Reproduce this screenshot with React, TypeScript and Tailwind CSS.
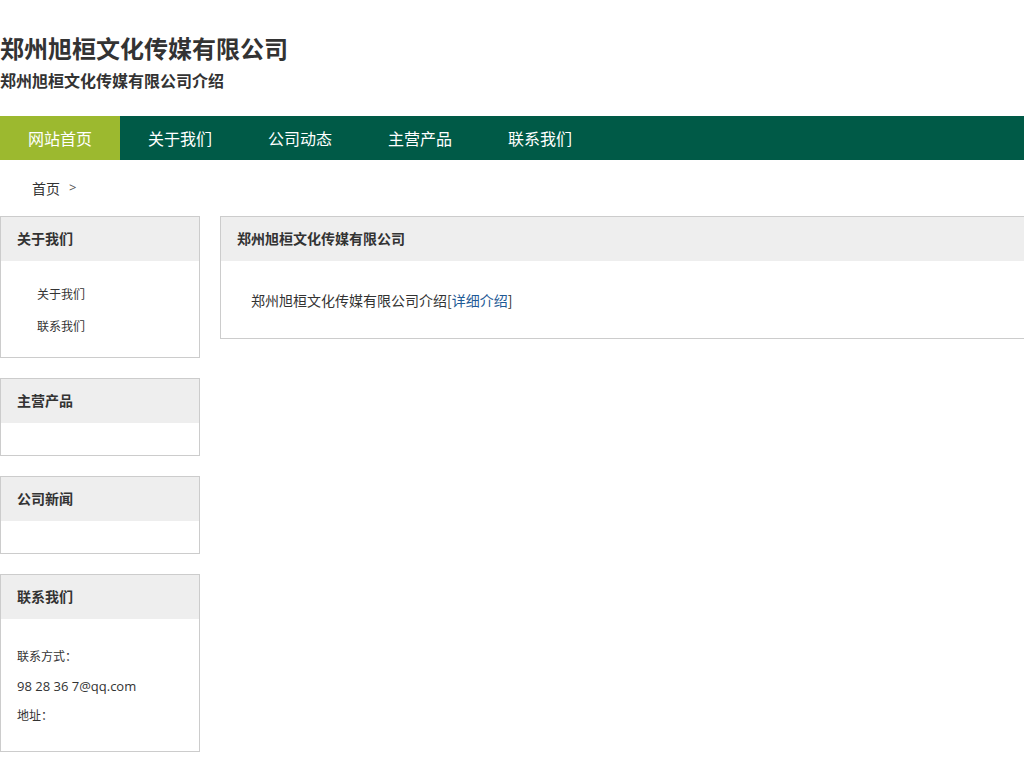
const font = { fontFamily: '"Noto Sans CJK SC", "Noto Sans", sans-serif' };
const latin = { fontFamily: '"Open Sans", "Noto Sans CJK SC", sans-serif' };

const navItems = ['网站首页', '关于我们', '公司动态', '主营产品', '联系我们'];

function SideBox({ title, children }: { title: string; children?: React.ReactNode }) {
  return (
    <div className="border border-[#cccccc] bg-white">
      <div className="flex h-[44px] items-center bg-[#eeeeee] pb-[1px] pl-[16px] text-[14px] font-bold text-[#333333]">
        {title}
      </div>
      {children ?? <div className="h-[32px]" />}
    </div>
  );
}

export default function App() {
  return (
    <div className="w-[1024px] min-h-[768px] overflow-hidden bg-white text-[#333333]" style={font}>
      {/* Header */}
      <div className="pt-[30px]">
        <h1 className="text-[24px] font-bold leading-[36px] text-[#333333]">郑州旭桓文化传媒有限公司</h1>
        <p className="mt-[2px] text-[16px] font-bold leading-[24px] text-[#333333]">郑州旭桓文化传媒有限公司介绍</p>
      </div>

      {/* Nav */}
      <div className="mt-[24px] flex h-[44px] bg-[#005a47]">
        {navItems.map((item, i) => (
          <div
            key={item}
            className={
              'flex w-[120px] items-center justify-center text-[16px] text-white ' +
              (i === 0 ? 'bg-[#9cb92f]' : '')
            }
          >
            {item}
          </div>
        ))}
      </div>

      {/* Breadcrumb */}
      <div className="flex h-[56px] items-center pl-[32px] text-[14px] text-[#333333]">
        <span>首页</span>
        <span className="ml-[9px] text-[13px] text-[#555555]" style={latin}>&gt;</span>
      </div>

      <div className="flex gap-[20px]">
        {/* Sidebar */}
        <div className="flex w-[200px] shrink-0 flex-col gap-[20px]">
          <SideBox title="关于我们">
            <div className="pt-[17px] pb-[15px] pl-[36px] text-[12px]">
              <div className="flex h-[32px] items-center">关于我们</div>
              <div className="flex h-[32px] items-center">联系我们</div>
            </div>
          </SideBox>
          <SideBox title="主营产品" />
          <SideBox title="公司新闻" />
          <SideBox title="联系我们">
            <div className="pt-[22px] pb-[24px] pl-[16px] text-[12px]">
              <div className="flex h-[30px] items-center">联系方式：</div>
              <div className="flex h-[32px] items-center text-[13px]" style={latin}>98 28 36 7@qq.com</div>
              <div className="flex h-[24px] items-center">地址：</div>
            </div>
          </SideBox>
        </div>

        {/* Main */}
        <div className="w-[830px] shrink-0 self-start border border-[#cccccc]">
          <div className="flex h-[44px] items-center bg-[#eeeeee] pb-[1px] pl-[16px] text-[14px] font-bold">
            郑州旭桓文化传媒有限公司
          </div>
          <div className="pt-[27px] pb-[26px] pl-[30px] text-[14px] leading-[24px]">
            郑州旭桓文化传媒有限公司介绍[<a className="text-[#1e5a96]">详细介绍</a>]
          </div>
        </div>
      </div>
    </div>
  );
}
